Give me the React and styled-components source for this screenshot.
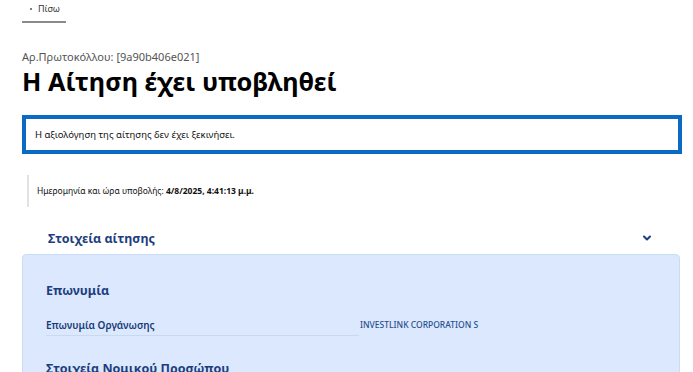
import styled, { createGlobalStyle } from "styled-components";

const GlobalStyle = createGlobalStyle`
  body {
    margin: 0;
    font-family: "Noto Sans", "Open Sans", sans-serif;
    background: #fff;
    color: #0b0c0c;
  }
`;

const Page = styled.div`
  padding: 0 11px 0 22px;
  display: flex;
  flex-direction: column;
`;

const BackLink = styled.a`
  align-self: flex-start;
  display: flex;
  align-items: center;
  gap: 6px;
  margin-top: 2px;
  padding: 0 6px 6px 8px;
  border-bottom: 2px solid #8a8a8a;
  font-size: 9px;
  color: #333;
  text-decoration: none;

  &::before {
    content: "";
    width: 2px;
    height: 2px;
    background: #555;
    border-radius: 50%;
  }
`;

const Protocol = styled.div`
  margin-top: 27px;
  font-size: 11px;
  color: #555;
  line-height: 14px;
`;

const Title = styled.h1`
  margin: 0;
  font-size: 25.3px;
  font-weight: 700;
  line-height: 34px;
  color: #000;
`;

const Callout = styled.div`
  margin-top: 17px;
  border: 4px solid #0a6ac4;
  padding: 10px 9px;
  font-size: 9.5px;
  line-height: 11px;
  color: #111;
`;

const SubmitInfo = styled.div`
  margin: 21px 0 0 5px;
  border-left: 2px solid #e2e2e2;
  padding: 10px 8px;
  font-size: 8.5px;
  line-height: 12px;
  color: #111;

  strong {
    font-weight: 700;
  }
`;

const SectionHeader = styled.div`
  display: flex;
  justify-content: space-between;
  align-items: center;
  padding: 21px 30px 0 26px;
  height: 20px;
`;

const SectionTitle = styled.h2`
  margin: 0;
  font-size: 12.5px;
  font-weight: 700;
  color: #1c3e7e;
`;

const Chevron = styled.svg`
  width: 10px;
  height: 10px;
  color: #1c3e7e;
`;

const Panel = styled.div`
  margin-top: 6px;
  margin-right: 2px;
  background: #dbe8fd;
  border: 1px solid #c9dbf7;
  border-radius: 4px;
  padding: 27px 24px 0 23px;
  min-height: 140px;
`;

const GroupTitle = styled.h3`
  margin: 0 0 18px;
  font-size: 12.5px;
  font-weight: 700;
  color: #1c3e7e;
  line-height: 18px;
`;

const Row = styled.div`
  display: grid;
  grid-template-columns: 313px 1fr;
  margin-bottom: 24px;
`;

const Label = styled.div`
  font-size: 10px;
  font-weight: 600;
  line-height: 14px;
  color: #173a78;
  padding-bottom: 3px;
  border-bottom: 1px solid #cbd9ee;
`;

const Value = styled.div`
  font-size: 8.5px;
  font-weight: 500;
  line-height: 14px;
  color: #2a4f8f;
  padding-left: 1px;
`;

export default function App() {
  return (
    <>
      <GlobalStyle />
      <Page>
        <BackLink href="#">Πίσω</BackLink>
        <Protocol>Αρ.Πρωτοκόλλου: [9a90b406e021]</Protocol>
        <Title>Η Αίτηση έχει υποβληθεί</Title>
        <Callout>Η αξιολόγηση της αίτησης δεν έχει ξεκινήσει.</Callout>
        <SubmitInfo>
          Ημερομηνία και ώρα υποβολής: <strong>4/8/2025, 4:41:13 μ.μ.</strong>
        </SubmitInfo>
        <SectionHeader>
          <SectionTitle>Στοιχεία αίτησης</SectionTitle>
          <Chevron viewBox="0 0 10 10" fill="none">
            <path d="M2 3.5 L5 6.5 L8 3.5" stroke="currentColor" strokeWidth="2" strokeLinecap="round" strokeLinejoin="round" />
          </Chevron>
        </SectionHeader>
        <Panel>
          <GroupTitle>Επωνυμία</GroupTitle>
          <Row>
            <Label>Επωνυμία Οργάνωσης</Label>
            <Value>INVESTLINK CORPORATION S</Value>
          </Row>
          <GroupTitle>Στοιχεία Νομικού Προσώπου</GroupTitle>
        </Panel>
      </Page>
    </>
  );
}
